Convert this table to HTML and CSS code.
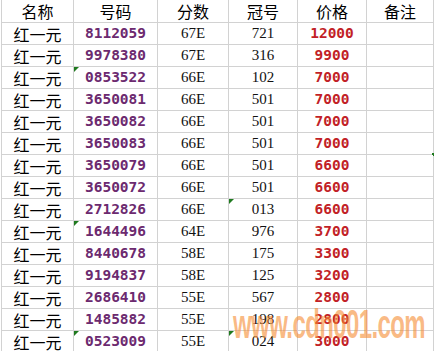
FILE: index.html
```html
<!DOCTYPE html>
<html lang="zh">
<head>
<meta charset="utf-8">
<link rel="stylesheet" href="styles.css">
</head>
<body>
<div class="page">
  <div class="sheet">
    <div class="cell head">名称</div><div class="cell head">号码</div><div class="cell head">分数</div><div class="cell head">冠号</div><div class="cell head">价格</div><div class="cell head">备注</div>

    <div class="cell name">红一元</div><div class="cell num">8112059</div><div class="cell plain">67E</div><div class="cell plain">721</div><div class="cell price">12000</div><div class="cell"></div>
    <div class="cell name">红一元</div><div class="cell num">9978380</div><div class="cell plain">67E</div><div class="cell plain">316</div><div class="cell price">9900</div><div class="cell"></div>
    <div class="cell name">红一元</div><div class="cell num flag">0853522</div><div class="cell plain">66E</div><div class="cell plain">102</div><div class="cell price">7000</div><div class="cell"></div>
    <div class="cell name">红一元</div><div class="cell num">3650081</div><div class="cell plain">66E</div><div class="cell plain">501</div><div class="cell price">7000</div><div class="cell"></div>
    <div class="cell name">红一元</div><div class="cell num">3650082</div><div class="cell plain">66E</div><div class="cell plain">501</div><div class="cell price">7000</div><div class="cell"></div>
    <div class="cell name">红一元</div><div class="cell num">3650083</div><div class="cell plain">66E</div><div class="cell plain">501</div><div class="cell price">7000</div><div class="cell"><span class="edge-mark"></span></div>
    <div class="cell name">红一元</div><div class="cell num">3650079</div><div class="cell plain">66E</div><div class="cell plain">501</div><div class="cell price">6600</div><div class="cell"></div>
    <div class="cell name">红一元</div><div class="cell num">3650072</div><div class="cell plain">66E</div><div class="cell plain">501</div><div class="cell price">6600</div><div class="cell"></div>
    <div class="cell name">红一元</div><div class="cell num">2712826</div><div class="cell plain">66E</div><div class="cell plain flag">013</div><div class="cell price">6600</div><div class="cell"></div>
    <div class="cell name">红一元</div><div class="cell num flag">1644496</div><div class="cell plain">64E</div><div class="cell plain">976</div><div class="cell price">3700</div><div class="cell"></div>
    <div class="cell name">红一元</div><div class="cell num">8440678</div><div class="cell plain">58E</div><div class="cell plain">175</div><div class="cell price">3300</div><div class="cell"></div>
    <div class="cell name">红一元</div><div class="cell num">9194837</div><div class="cell plain">58E</div><div class="cell plain">125</div><div class="cell price">3200</div><div class="cell"></div>
    <div class="cell name">红一元</div><div class="cell num">2686410</div><div class="cell plain">55E</div><div class="cell plain">567</div><div class="cell price">2800</div><div class="cell"></div>
    <div class="cell name">红一元</div><div class="cell num">1485882</div><div class="cell plain">55E</div><div class="cell plain">198</div><div class="cell price">2800</div><div class="cell"></div>
    <div class="cell name">红一元</div><div class="cell num flag">0523009</div><div class="cell plain">55E</div><div class="cell plain flag">024</div><div class="cell price">3000</div><div class="cell"></div>
  </div>
  <div class="watermark">www.cdn001.com</div>
</div>
</body>
</html>
```

FILE: styles.css
```css
html, body {
  margin: 0;
  padding: 0;
  background: #ffffff;
}

.page {
  position: relative;
  width: 435px;
  height: 351px;
  overflow: hidden;
}

.sheet {
  display: grid;
  grid-template-columns: 71px 83px 70px 68px 68px 66px;
  grid-template-rows: 22px;
  grid-auto-rows: 21px;
  gap: 1px;
  background: #d2d2d2;
  padding: 0 1px 1px 1px;
  margin-left: 1px;
  width: max-content;
}

.cell {
  position: relative;
  background: #ffffff;
  display: flex;
  align-items: center;
  justify-content: center;
  font-family: "Noto Sans CJK SC", sans-serif;
  font-size: 16px;
  color: #000000;
  line-height: 1;
}

.head,
.name {
  font-family: "Noto Sans CJK SC", sans-serif;
  font-size: 16px;
  font-weight: 400;
}

.num,
.price {
  font-family: "DejaVu Sans Mono", monospace;
  font-weight: 700;
  font-size: 14.5px;
  letter-spacing: 0;
}

.num {
  color: #6c2a6f;
}

.price {
  color: #c21f27;
}

.plain {
  font-family: "Liberation Serif", serif;
  font-size: 15px;
  color: #111111;
}

.flag::before {
  content: "";
  position: absolute;
  left: 0;
  top: 0;
  width: 0;
  height: 0;
  border-top: 5px solid #1f7a1f;
  border-right: 5px solid transparent;
}

.edge-mark {
  position: absolute;
  right: -1px;
  bottom: -2px;
  width: 2px;
  height: 3px;
  background: #1f7a1f;
}

.watermark {
  position: absolute;
  left: 233px;
  top: 304px;
  font-family: "Liberation Sans", sans-serif;
  font-weight: 700;
  font-size: 40px;
  letter-spacing: -1px;
  line-height: 1;
  color: rgba(246, 140, 50, 0.6);
  transform: scaleX(0.6);
  transform-origin: left top;
  white-space: nowrap;
}
```
